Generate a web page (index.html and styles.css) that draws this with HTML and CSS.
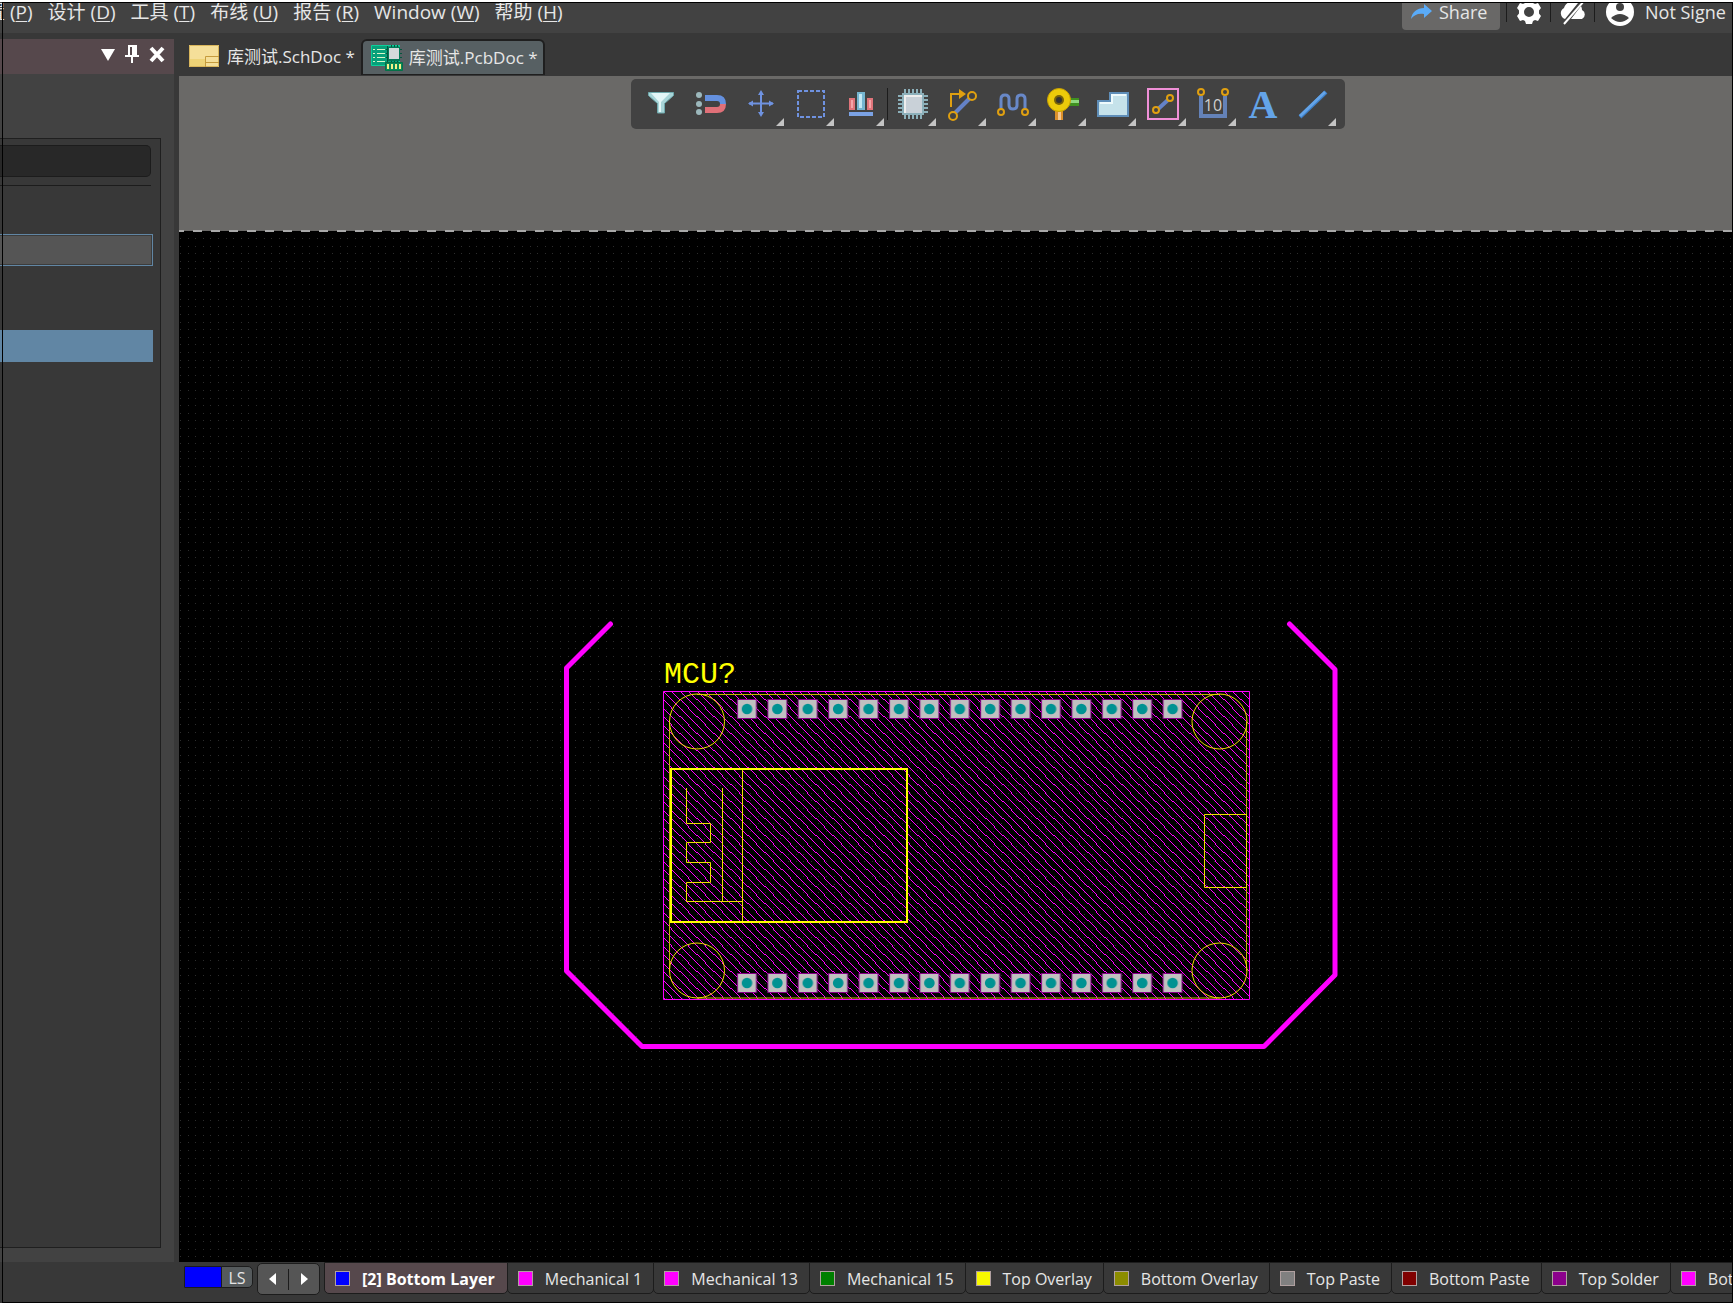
FILE: index.html
```html
<!DOCTYPE html>
<html lang="zh-CN">
<head>
<meta charset="utf-8">
<title>库测试.PcbDoc</title>
<link rel="stylesheet" href="styles.css">
</head>
<body>
<div class="app">
  <header class="menubar">
    <nav class="menus">
      <button class="menu">放置 (<u>P</u>)</button>
      <button class="menu">设计 (<u>D</u>)</button>
      <button class="menu">工具 (<u>T</u>)</button>
      <button class="menu">布线 (<u>U</u>)</button>
      <button class="menu">报告 (<u>R</u>)</button>
      <button class="menu">Window (<u>W</u>)</button>
      <button class="menu">帮助 (<u>H</u>)</button>
    </nav>
    <div class="account">
      <button class="share">
        <svg width="22" height="16" viewBox="0 0 22 16"><path d="M13 0l8 7-8 7v-4C7 9 3 11 0 15 1 8 6 4 13 4z" fill="#5aabf8"/></svg>
        Share
      </button>
      <button class="status" aria-label="Settings">
        <svg width="26" height="26" viewBox="0 0 26 26"><path fill="#fff" fill-rule="evenodd" d="M10 1h6l1 3 2 1 3-1 3 5-2 2.500v3l2 2.500-3 5-3-1-2 1-1 3h-6l-1-3-2-1-3 1-3-5 2-2.500v-3L1 9l3-5 3 1 2-1zM13 8a5 5 0 1 0 0 10 5 5 0 0 0 0-10z"/></svg>
      </button>
      <button class="status" aria-label="Offline">
        <svg width="28" height="26" viewBox="0 0 28 26"><path fill="#fff" d="M6 20a6 6 0 0 1-1-11 9 9 0 0 1 14-5L6 20zM22 7q1 2 1 4a5 5 0 0 1 0 9H12z"/><path d="M5 25L25 2" stroke="#fff" stroke-width="2"/></svg>
      </button>
      <button class="status user">
        <svg width="28" height="28" viewBox="0 0 28 28"><circle cx="14" cy="14" r="14" fill="#fff"/><circle cx="14" cy="9" r="4" fill="#424242"/><path d="M5 20q9-8 18 0-9 8-18 0z" fill="#424242"/></svg>
        <span>Not Signe</span>
      </button>
    </div>
  </header>

  <aside class="side">
    <div class="side-head">
      <button aria-label="Menu"><svg width="14" height="18" viewBox="0 0 14 18"><path d="M0 4h14L7 16z" fill="#fff"/></svg></button>
      <button aria-label="Pin"><svg width="14" height="18" viewBox="0 0 14 18"><path d="M3 0h9v10h2v2H8v6H6v-6H0v-2h3zM5 2v8h2V2z" fill="#fff" fill-rule="evenodd"/></svg></button>
      <button aria-label="Close"><svg width="16" height="18" viewBox="0 0 16 18"><path d="M2 3l12 13M14 3L2 16" stroke="#fff" stroke-width="4"/></svg></button>
    </div>
    <div class="side-body">
      <div class="group">
        <input class="search" type="text" aria-label="Search">
        <hr class="rule">
        <input class="field" type="text" aria-label="Name">
        <div class="selected-row"></div>
      </div>
    </div>
  </aside>

  <main class="work">
    <nav class="doctabs">
      <a class="doctab" href="#sch">
        <svg width="30" height="24" viewBox="0 0 30 24"><path d="M0 0h30v22H0z" fill="#f5df99"/><path d="M0 14h16v8H0z" fill="#eed377"/><path d="M.5.500h29v21H.500z" fill="none" stroke="#d9b65c"/><path d="M16.500 22V11.500H30M16.500 17.500H30" fill="none" stroke="#c59b3d"/></svg>
        库测试.SchDoc *
      </a>
      <a class="doctab current" href="#pcb">
        <svg width="32" height="26" viewBox="0 0 32 26"><path d="M.5.500h28v20H.500z" fill="#08a07a" stroke="#0bd09a"/><path d="M6 4.500h8M6 8.500h8M6 12.500h8M6 16.500h8" stroke="#d8f5c8"/><path d="M3 4v1m0 3v1m0 3v1m0 3v1" stroke="#d8f5c8" stroke-width="2"/><path d="M16.500 1v16M20.500 0v17M23.500 0v17M26.500 0v17M15 4.500h16M15 8.500h16M15 12.500h16" stroke="#05563e"/><path d="M17 2h12v14H17z" fill="#067a58"/><path d="M18 3h10v11H18z" fill="#d5dadb"/><path d="M14.500 17.500h17v8h-17z" fill="#0a8a5a" stroke="#057048"/><path d="M17 19v5m4-5v5m4-5v5m4-5v5" stroke="#f4f08a" stroke-width="2"/></svg>
        库测试.PcbDoc *
      </a>
    </nav>

    <section class="canvas">
      <svg class="board" width="100%" height="100%">
        <defs>
          <pattern id="grid" x="180" y="238" width="38" height="38" patternUnits="userSpaceOnUse">
            <path stroke="#2d2d2d" stroke-dasharray="1 7 1 6 1 7 1 6 1 7" d="M0 .5h38M0 8.500h38M0 15.500h38M0 23.500h38M0 30.500h38"/>
          </pattern>
          <pattern id="hatch" x="663" y="691" width="17" height="17" patternUnits="userSpaceOnUse">
            <path d="M-1-1l19 19M-1 16l2 2M16-1l2 2M-1 7l11 11M7-1l11 11" stroke="#f0f" shape-rendering="crispEdges"/>
          </pattern>
          <pattern id="pads" x="732" y="0" width="30.400" height="1400" patternUnits="userSpaceOnUse">
            <g id="pad"><path d="M5.500 699.500h19v19h-19z" fill="#c0c0c0" stroke="#850085"/><circle cx="15" cy="709" r="5.300" fill="#009292"/></g>
            <use href="#pad" y="274"/>
          </pattern>
        </defs>
        <g transform="translate(-179 -76)">
          <path class="void" d="M179 231h4000v4000H179z"/>
          <path fill="url(#grid)" d="M179 232h4000v4000H179z"/>
          <path class="edge" d="M175 231h4000"/>
          <path class="outline" d="M610.500 624l-44 44v303l75.500 75.500h622l71-71.500V669.500L1289.500 624"/>
          <path class="court" fill="url(#hatch)" d="M663.500 691.500h586v308h-586z"/>
          <path class="silk dim" d="M697 694.500h523M669.500 721v250M697 998h523M1246.500 721v250"/>
          <g class="silk">
            <circle cx="697" cy="721.500" r="27.500"/><circle cx="697" cy="970.500" r="27.500"/>
            <circle cx="1219.500" cy="721.500" r="27.500"/><circle cx="1219.500" cy="970.500" r="27.500"/>
            <path d="M742.500 769v153M722.500 788v113M686.500 788v35.500h24v19h-24v20h24v20h-24v19h56M1246.500 814.500h-42v73h42z"/>
          </g>
          <path class="silk bold" d="M671 769h236v153H671z"/>
          <path fill="url(#pads)" d="M732 690h456v310H732z"/>
          <text class="designator" x="664" y="683">MCU?</text>
        </g>
      </svg>
      <div class="toolbar">
        <button class="tool" aria-label="Filter"><svg viewBox="0 0 32 32"><path d="M3.500 4.500h25v3l-9 8V25h-7v-9.500l-9-8z" fill="#a8d5d8" stroke="#6fa9ad"/><path d="M6 5h19l-9 9v10h-2V14z" fill="#e3f6f7"/></svg></button>
        <button class="tool" aria-label="Snap"><svg viewBox="0 0 32 32"><circle cx="4" cy="7" r="3" fill="#9cb8bc"/><circle cx="4" cy="16" r="3" fill="#9cb8bc"/><circle cx="4" cy="24" r="3" fill="#9cb8bc"/><path d="M10 10h12q6 0 6 6" fill="none" stroke="#6490de" stroke-width="6"/><path d="M10 22h12q6 0 6-6" fill="none" stroke="#e07078" stroke-width="6"/></svg></button>
        <button class="tool more" aria-label="Move"><svg viewBox="0 0 32 32"><path d="M16 4v23M4 15.500h24" stroke="#6f92e0" stroke-width="2"/><path d="M16 2l-3 5h6zM16 29l-3-5h6zM3 15.500l5-3v6zM29 15.500l-5-3v6z" fill="#6f92e0"/></svg></button>
        <button class="tool more" aria-label="Select"><svg viewBox="0 0 32 32"><path d="M3 3h26v26H3z" fill="none" stroke="#6f92e0" stroke-width="2" stroke-dasharray="4 2"/></svg></button>
        <button class="tool more" aria-label="Align"><svg viewBox="0 0 32 32"><path d="M4 10h6v12H4zM22 10h6v12h-6z" fill="#e0747a"/><path d="M6 12h2v8H6zM24 12h2v8h-2z" fill="#f4a5a8"/><path d="M12 4h8v18h-8z" fill="#75b5d0"/><path d="M14 6h3v14h-3z" fill="#c3e8f4"/><path d="M4 24h24v4H4z" fill="#7ba2e4"/></svg></button>
        <span class="divider"></span>
        <button class="tool more" aria-label="Place component"><svg viewBox="0 0 32 32"><path d="M8 1v30M12 1v30M16 1v30M20 1v30M24 1v30M1 8h30M1 12h30M1 16h30M1 20h30M1 24h30" stroke="#8cb0ba" stroke-width="2"/><path d="M5 5h22v22H5z" fill="#8cb0ba"/><path d="M7 7h18v18H7z" fill="#c9d1d8"/><path d="M7 7h18v2H9v16H7z" fill="#eee"/></svg></button>
        <button class="tool more" aria-label="Route"><svg viewBox="0 0 32 32"><path d="M8 25L24 9" stroke="#6482c8" stroke-width="4"/><path d="M4 19V6h9" fill="none" stroke="#e0a010" stroke-width="2"/><path d="M12 1l7 5-7 5z" fill="#e0a010"/><circle class="ring" cx="25" cy="8" r="4"/><circle class="ring" cx="6" cy="28" r="4"/></svg></button>
        <button class="tool more" aria-label="Tune"><svg viewBox="0 0 32 32"><path d="M4 21V11q0-4 4-4t4 4v6q0 4 4 4t4-4v-6q0-4 4-4t4 4v10" fill="none" stroke="#6888c8" stroke-width="3"/><circle class="ring" cx="4" cy="24" r="3"/><circle class="ring" cx="28" cy="24" r="3"/></svg></button>
        <button class="tool more" aria-label="Via"><svg viewBox="0 0 32 32"><path d="M22 10h10v8H22z" fill="#3f9020"/><path d="M22 12h10v3H22z" fill="#90d880"/><path d="M8 22h8v10H8z" fill="#dc902c"/><path d="M11 22h3v10h-3z" fill="#f5c890"/><circle cx="12" cy="12" r="11.500" fill="#eccb0a" stroke="#c8a000"/><circle cx="12" cy="12" r="5" fill="#77630a"/><circle cx="12" cy="12" r="3" fill="#333"/></svg></button>
        <button class="tool more" aria-label="Polygon"><svg viewBox="0 0 32 32"><path d="M1 28V13h12V5h18v23z" fill="#c5e2ea" stroke="#5f8eb8" stroke-width="2"/><path d="M3 15h12V7h14" fill="none" stroke="#eefafc" stroke-width="2"/></svg></button>
        <button class="tool more" aria-label="Keepout"><svg viewBox="0 0 32 32"><path d="M1 1h30v30H1z" fill="none" stroke="#f090d8" stroke-width="2"/><path d="M10 22L22 11" stroke="#6482c8" stroke-width="4"/><circle class="ring" cx="23" cy="10" r="3"/><circle class="ring" cx="9" cy="22" r="3"/></svg></button>
        <button class="tool more" aria-label="Dimension"><svg viewBox="0 0 32 32"><path d="M4 8v20h24V8" fill="none" stroke="#6482b8" stroke-width="4"/><circle class="ring" cx="4" cy="4" r="3"/><circle class="ring" cx="28" cy="4" r="3"/><text x="16" y="23" class="dim-text">10</text></svg></button>
        <button class="tool" aria-label="Text"><svg viewBox="0 0 32 32"><text x="16" y="30" class="letter">A</text></svg></button>
        <button class="tool more" aria-label="Line"><svg viewBox="0 0 32 32"><path d="M3 29L29 4" stroke="#3f80c8" stroke-width="4"/><path d="M3 28L28 4" stroke="#64a4e8" stroke-width="3"/></svg></button>
      </div>
    </section>
  </main>

  <footer class="layers">
    <button class="layer-set"><i></i><span>LS</span></button>
    <div class="pager">
      <button aria-label="Previous layer"><svg width="8" height="12" viewBox="0 0 8 12"><path d="M7 0v12L0 6z" fill="#fff"/></svg></button>
      <button aria-label="Next layer"><svg width="8" height="12" viewBox="0 0 8 12"><path d="M1 0v12l7-6z" fill="#fff"/></svg></button>
    </div>
    <button class="layer active"><i class="blue"></i>[2] Bottom Layer</button>
    <button class="layer"><i class="magenta"></i>Mechanical 1</button>
    <button class="layer"><i class="magenta"></i>Mechanical 13</button>
    <button class="layer"><i class="green"></i>Mechanical 15</button>
    <button class="layer"><i class="yellow"></i>Top Overlay</button>
    <button class="layer"><i class="olive"></i>Bottom Overlay</button>
    <button class="layer"><i class="gray"></i>Top Paste</button>
    <button class="layer"><i class="maroon"></i>Bottom Paste</button>
    <button class="layer"><i class="purple"></i>Top Solder</button>
    <button class="layer"><i class="magenta"></i>Bottom Solder</button>
  </footer>
</div>
</body>
</html>
```
FILE: styles.css
```css
* { box-sizing: border-box; }

body {
  margin: 0;
  background: #fff;
  color: #e6e6e6;
  font: 16px/24px "Open Sans", "Noto Sans CJK SC", sans-serif;
}

button, input {
  margin: 0;
  padding: 0;
  border: 0;
  background: none;
  color: inherit;
  font: inherit;
}

button { white-space: nowrap; }

.app {
  display: grid;
  grid-template: 31px 1fr 41px / 179px minmax(0, 1fr);
  height: 100vh;
  border-top: 2px solid #fff;
  border-right: 2px solid #fff;
  background: #383838;
  overflow: hidden;
  position: relative;
}

/* window frame */
.app::after {
  content: "";
  position: absolute;
  inset: 0 0 0 2px;
  border: 1px solid #000;
  pointer-events: none;
}

.menubar {
  grid-column: 1 / -1;
  display: flex;
  justify-content: space-between;
  background: #424242;
  font-size: 18px;
  min-width: 0;
}

.menus {
  display: flex;
  gap: 15px;
  height: 20px;
  margin-left: -33px;
  font-size: 19px;
}

.menu { line-height: 20px; }
.menu u { text-underline-offset: 2px; }

.account {
  display: flex;
  width: 331px;
}

.share {
  display: flex;
  flex: none;
  align-items: center;
  gap: 6px;
  width: 98px;
  height: 28px;
  margin-right: 6px;
  padding: 0 0 8px 9px;
  border-radius: 0 0 4px 4px;
  background: #696867;
}

.status {
  display: flex;
  flex: none;
  align-items: center;
  justify-content: center;
  gap: 11px;
  width: 44px;
  height: 20px;
  border-left: 1px solid #1c1c1c;
}

.status.user {
  width: auto;
  padding-left: 11px;
}

.side {
  display: flex;
  flex-direction: column;
  margin: 6px 5px 0 0;
}

.side-head {
  display: flex;
  flex: none;
  align-items: center;
  justify-content: flex-end;
  gap: 10px;
  height: 35px;
  padding: 0 9px 5px 0;
  background: #56484c;
}

.side-head button { display: flex; }

.side-body {
  flex: 1;
  padding: 64px 13px 14px 0;
  background: #424242;
}

.group {
  height: 100%;
  padding: 6px 7px 0 0;
  border: solid #1f1f1f;
  border-width: 1px 1px 1px 0;
  background: #383838;
}

.search {
  display: block;
  width: calc(100% - 2px);
  height: 32px;
  border: 1px solid #1c1c1c;
  border-left: 0;
  border-radius: 0 5px 5px 0;
  background: #282828;
}

.rule {
  width: calc(100% - 2px);
  height: 1px;
  margin: 8px 0 48px;
  border: 0;
  background: #1c1c1c;
}

.field {
  display: block;
  width: 100%;
  height: 32px;
  border: 1px solid #6186a4;
  border-left: 0;
  box-shadow: inset -1px -1px #3c3c3c, inset 0 1px #3c3c3c;
  background: #555;
}

.selected-row {
  height: 32px;
  margin-top: 64px;
  background: #6186a4;
}

.work {
  display: flex;
  flex-direction: column;
  min-width: 0;
  min-height: 0;
}

.doctabs {
  display: flex;
  height: 43px;
  padding-top: 6px;
}

.doctab {
  display: flex;
  align-items: center;
  gap: 8px;
  height: 36px;
  padding: 0 6px 0 10px;
  color: #e6e6e6;
  font-size: 17px;
  text-decoration: none;
  white-space: nowrap;
}

.doctab.current {
  gap: 6px;
  padding: 0 5px 0 8px;
  border: 2px solid #1f1f1f;
  border-bottom-width: 1px;
  border-radius: 6px 6px 0 0;
  background: #576063;
}

.canvas {
  position: relative;
  flex: 1;
  min-height: 0;
  background: #6a6967;
}

.board {
  position: absolute;
  inset: 0;
}

.void { fill: #000; }
.edge { fill: none; stroke: #a9a9a9; stroke-width: 2px; stroke-dasharray: 9 9; }
.outline { fill: none; stroke: #f0f; stroke-width: 5px; stroke-linecap: round; stroke-linejoin: round; }
.court { stroke: #f0f; }
.silk { fill: none; stroke: #f0de00; }
.silk.dim { stroke: #c4b200; }
.silk.bold { stroke: #ff0; stroke-width: 2px; }
.designator { fill: #ff0; font: 30px "Liberation Mono", monospace; }

.toolbar {
  position: relative;
  display: flex;
  width: max-content;
  height: 50px;
  margin: 0 auto;
  top: 3px;
  left: 32px;
  padding: 0 7px 0 5px;
  border-radius: 5px;
  background: #424242;
}

.tool {
  position: relative;
  display: flex;
  align-items: center;
  justify-content: center;
  width: 50px;
}

.tool svg { width: 32px; height: 32px; overflow: visible; }

.tool.more::after {
  content: "";
  position: absolute;
  right: 2px;
  bottom: 3px;
  border: 4px solid;
  border-color: transparent #c4c4c4 #c4c4c4 transparent;
}

.divider {
  width: 1px;
  height: 32px;
  margin: 9px 0 0 1px;
  background: #1c1c1c;
}

.ring { fill: #424242; stroke: #e0a010; stroke-width: 2px; }
.dim-text { fill: #d0d0d0; font: 16px "Open Sans", sans-serif; text-anchor: middle; }
.letter { fill: #64a4e8; font: bold 40px "Liberation Serif", serif; text-anchor: middle; }

.layers {
  grid-column: 1 / -1;
  display: flex;
  align-items: flex-start;
  min-width: 0;
  padding-left: 184px;
  overflow: hidden;
}

.layers button { flex: none; }

.layer-set {
  display: flex;
  width: 69px;
  height: 22px;
  margin: 4px 4px 0 0;
  border: 1px solid #1c1c1c;
  border-radius: 0 5px 5px 0;
  background: #555a5c;
  line-height: 22px;
}

.layer-set i { width: 36px; height: 20px; background: #00f; }
.layer-set span { flex: 1; border-left: 1px solid #1c1c1c; }

.pager {
  display: flex;
  flex: none;
  align-items: center;
  width: 63px;
  height: 32px;
  margin: 1px 4px 0 0;
  border: 1px solid #1c1c1c;
  border-radius: 5px;
  background: #555;
}

.pager button {
  display: flex;
  flex: 1;
  align-items: center;
  justify-content: center;
  height: 21px;
}

.pager button + button { border-left: 1px solid #1c1c1c; }

.layer {
  display: flex;
  align-items: center;
  height: 32px;
  margin-right: -1px;
  padding: 1px 11px 0 10px;
  border: 1px solid #1c1c1c;
  border-radius: 0 0 5px 5px;
  line-height: 30px;
}

.layer.active {
  padding-right: 12px;
  background: #56484c;
  color: #fff;
  font-weight: 700;
}

.layer i {
  width: 15px;
  height: 15px;
  margin-right: 12px;
  border: 1px solid #b0a0a0;
}

.blue { background: #00f; }
.magenta { background: #f0f; }
.green { background: #008000; }
.yellow { background: #f8f800; }
.olive { background: #8c8c00; }
.gray { background: #808080; }
.maroon { background: #800000; }
.purple { background: #8c008c; }
```
